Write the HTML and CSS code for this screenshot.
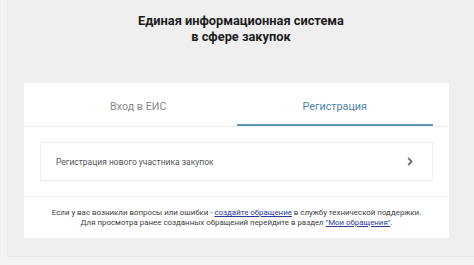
FILE: index.html
```html
<!DOCTYPE html>
<html lang="ru">
<head>
<meta charset="utf-8">
<link rel="stylesheet" href="styles.css">
</head>
<body>
<div class="page">
  <header class="head">
    <h1 class="title">Единая информационная система<br>в сфере закупок</h1>
  </header>
  <main class="card">
    <nav class="tabs">
      <div class="tab">Вход в ЕИС</div>
      <div class="tab tab-active">Регистрация</div>
    </nav>
    <section class="body">
      <a class="row">
        <span class="row-text">Регистрация нового участника закупок</span>
        <svg class="chev" width="6" height="9" viewBox="0 0 6 9"><path d="M1.2 1 L4.6 4.5 L1.2 8" fill="none" stroke="#707070" stroke-width="1.8"/></svg>
      </a>
    </section>
    <footer class="foot">
      <p class="foot-line">Если у вас возникли вопросы или ошибки - <a class="link">создайте обращение</a> в службу технической поддержки.</p>
      <p class="foot-line">Для просмотра ранее созданных обращений перейдите в раздел <a class="link">"Мои обращения"</a>.</p>
    </footer>
  </main>
</div>
</body>
</html>
```
FILE: styles.css
```css
html, body {
  margin: 0;
  padding: 0;
}
body {
  background: #f3f3f3;
  font-family: Roboto, "Liberation Sans", sans-serif;
  width: 474px;
  height: 265px;
  overflow: hidden;
}
.page {
  margin-left: 7px;
  height: 257px;
  background: #efefef;
  border-left: 1px solid #e9e9e9;
  border-bottom: 1px solid #e6e6e6;
  padding-top: 13px;
  box-sizing: border-box;
}
.head {
  text-align: center;
}
.title {
  margin: 0;
  font-size: 12.8px;
  line-height: 16px;
  font-weight: 700;
  color: #1e1e1e;
}
.card {
  margin: 38px 25px 0 16px;
  background: #fff;
}
.tabs {
  display: grid;
  grid-template-columns: 1fr 1fr;
  padding: 0 16px;
  border-bottom: 1px solid #f0f0f0;
}
.tab {
  height: 43px;
  box-sizing: border-box;
  padding-top: 17px;
  text-align: center;
  font-size: 10.8px;
  line-height: 13px;
  color: #8a8a8a;
}
.tab-active {
  color: #4f85a6;
  border-bottom: 2px solid #5e95b3;
}
.body {
  padding: 15px 16px;
  border-bottom: 1px solid #f0f0f0;
}
.row {
  display: flex;
  align-items: center;
  justify-content: space-between;
  height: 39px;
  box-sizing: border-box;
  padding: 0 19px 0 15px;
  border: 1px solid #efefef;
}
.row-text {
  font-size: 8.5px;
  color: #555;
}
.chev {
  display: block;
}
.foot {
  padding: 11px 10px 11px;
  text-align: center;
}
.foot-line {
  margin: 0;
  font-size: 7.9px;
  line-height: 9.5px;
  color: #3c3c3c;
}
.link {
  color: #2b3a9a;
  text-decoration: underline;
}
```
